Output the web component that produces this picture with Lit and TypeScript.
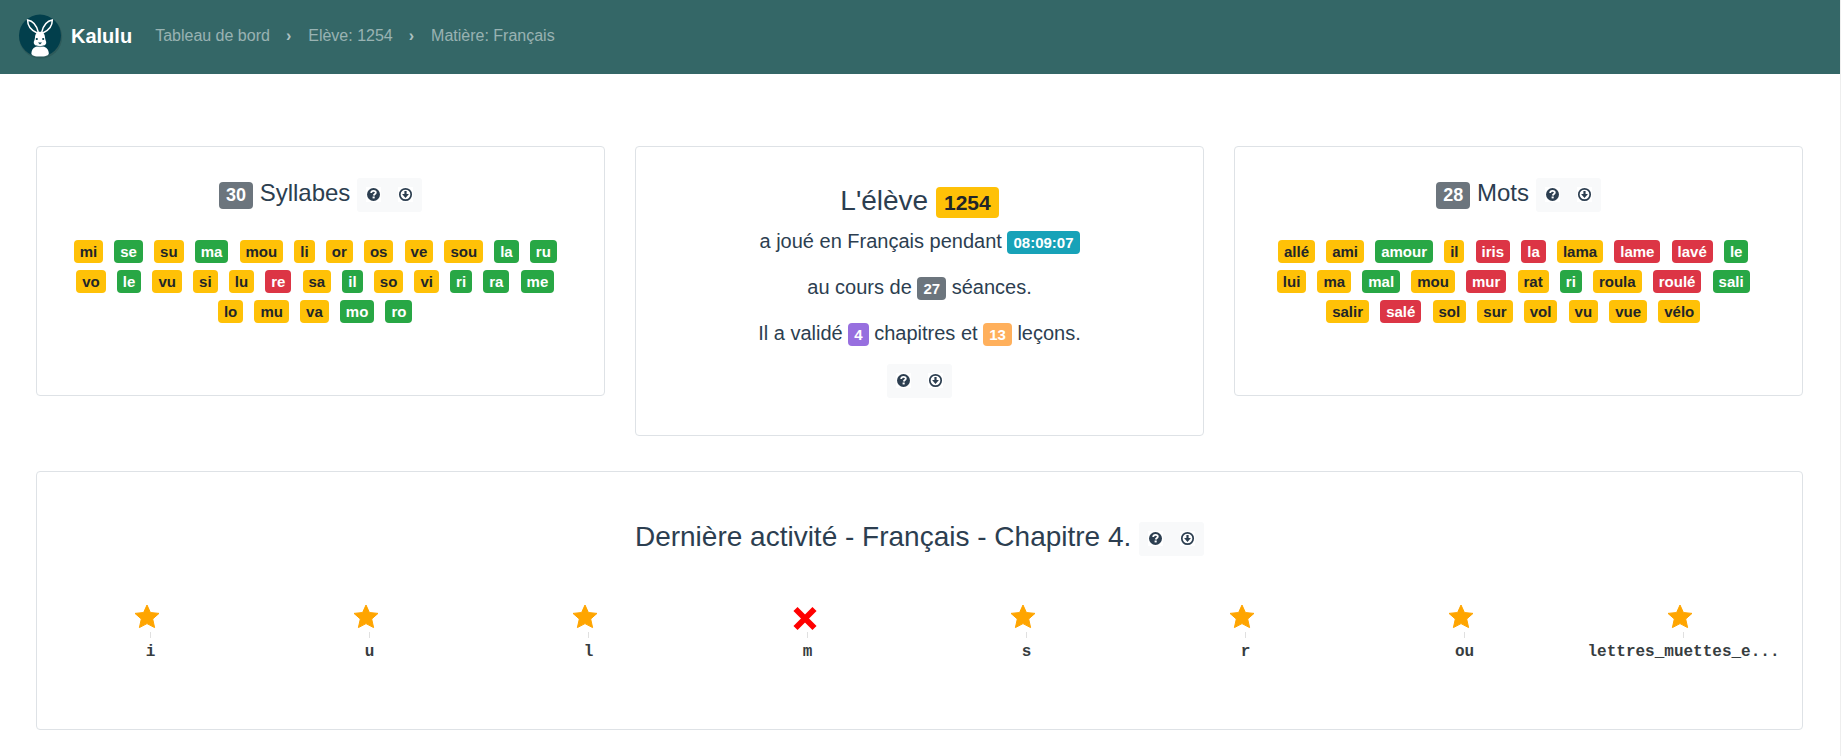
import { LitElement, html, css, svg } from "lit";
import { customElement, property } from "lit/decorators.js";

type Level = "warning" | "success" | "danger";
type Entry = [string, Level];

const LEVELS: Record<string, Level> = { w: "warning", s: "success", d: "danger" };

const parse = (source: string): Entry[] =>
  source.split(" ").map((item) => {
    const [text, level] = item.split(":");
    return [text, LEVELS[level ?? "w"]];
  });

const SYLLABLES = parse(
  "mi se:s su ma:s mou li or os ve sou la:s ru:s vo le:s vu si lu re:d sa il:s so vi ri:s ra:s me:s lo mu va mo:s ro:s"
);
const WORDS = parse(
  "allé ami amour:s il iris:d la:d lama lame:d lavé:d le:s lui ma mal:s mou mur:d rat ri:s roula roulé:d sali:s salir salé:d sol sur vol vu vue vélo"
);
const LESSONS: { name: string; passed: boolean }[] = [
  { name: "i", passed: true },
  { name: "u", passed: true },
  { name: "l", passed: true },
  { name: "m", passed: false },
  { name: "s", passed: true },
  { name: "r", passed: true },
  { name: "ou", passed: true },
  { name: "lettres_muettes_e...", passed: true },
];

const badgeStyles = css`
  .badge {
    display: inline-block;
    padding: 0 6px;
    border-radius: 4px;
    font-size: 15px;
    font-weight: 700;
    line-height: 23px;
    text-align: center;
    vertical-align: baseline;
    white-space: nowrap;
    color: #fff;
  }
  .warning { background: #ffc107; color: #212529; }
  .success { background: #28a745; }
  .danger { background: #dc3545; }
  .secondary { background: #6c757d; }
  .info { background: #17a2b8; }
  .purple { background: #976fdf; }
  .orange { background: #ffb05c; }
`;

@customElement("tool-buttons")
export class ToolButtons extends LitElement {
  static styles = css`
    :host {
      display: inline-flex;
      vertical-align: middle;
    }
    .group {
      display: flex;
      background: #f8f9fa;
      border-radius: 3px;
    }
    .tool {
      display: block;
      padding: 9px 9px 10px;
      border: 0;
      background: none;
      cursor: pointer;
    }
    .tool + .tool { margin-left: -1px; }
    .icon {
      display: block;
      width: 15px;
      height: 15px;
      background: #fff;
    }
  `;
  render() {
    return html`<div class="group" role="group">
      <button class="tool" type="button" aria-label="Aide">
        <svg class="icon" viewBox="0 0 15 15">
          <circle cx="7.5" cy="7.5" r="6.5" fill="#2c3e50" />
          <path d="M5.2 6.1C5.2 4.6 6.2 3.9 7.6 3.9C9 3.9 9.8 4.7 9.8 5.7C9.8 7 8.1 7 7.7 8.5" fill="none" stroke="#fff" stroke-width="1.8" />
          <rect x="6.6" y="9.5" width="2.1" height="1.9" fill="#fff" />
        </svg>
      </button>
      <button class="tool" type="button" aria-label="Télécharger">
        <svg class="icon" viewBox="0 0 15 15">
          <circle cx="7.5" cy="7.5" r="5.7" fill="none" stroke="#2c3e50" stroke-width="1.7" />
          <path d="M6.4 4H8.6V7H10.9L7.5 11L4.1 7H6.4Z" fill="#2c3e50" />
        </svg>
      </button>
    </div>`;
  }
}

@customElement("badge-card")
export class BadgeCard extends LitElement {
  @property() label = "";
  @property({ attribute: false }) entries: Entry[] = [];

  static styles = [
    badgeStyles,
    css`
      :host {
        display: block;
        box-sizing: border-box;
        min-height: 250px;
        padding: 31px 32px 32px;
        border: 1px solid #dee2e6;
        border-radius: 4px;
        text-align: center;
      }
      .title {
        margin: 0 0 23px;
        font-size: 24px;
        font-weight: 400;
        line-height: 29px;
      }
      .count {
        padding: 0 7px;
        font-size: 18px;
        line-height: 27px;
      }
      .list {
        margin: 0;
        padding-right: 5px;
        font-size: 20px;
        line-height: 30px;
      }
    `,
  ];
  render() {
    return html`
      <h4 class="title">
        <span class="badge count secondary">${this.entries.length}</span>
        ${this.label}
        <tool-buttons></tool-buttons>
      </h4>
      <p class="list">${this.entries.map(
        ([text, level]) => html`<span class="badge ${level}">${text}</span>&nbsp; `
      )}</p>
    `;
  }
}

const star = svg`<path d="M13 2L16.4 9.5L25 10.4L18.7 16L20.6 24.6L13 20.6L5.4 24.6L7.3 16L1 10.4L9.6 9.5Z"
  fill="#ffa500" stroke="#ffa500" stroke-width="1" stroke-linejoin="round" />`;
const cross = svg`<path d="M4.5 6L23.5 25M23.5 6L4.5 25" fill="none" stroke="#f00" stroke-width="5.8" />`;

@customElement("app-root")
export class AppRoot extends LitElement {
  static styles = [
    badgeStyles,
    css`
      :host {
        display: block;
        min-height: 100vh;
        box-sizing: border-box;
        border-right: 1px solid #eee;
        background: #fff;
        color: #2c3e50;
        font-family: "Liberation Sans", Arial, sans-serif;
        font-size: 16px;
        line-height: 24px;
      }
      .navbar {
        display: flex;
        align-items: center;
        padding: 12px 16px 14px;
        background: #346767;
      }
      .brand {
        display: flex;
        align-items: center;
        gap: 7px;
        margin-right: 15px;
        color: #fff;
        font-size: 20px;
        font-weight: 700;
        line-height: 30px;
        text-decoration: none;
      }
      .logo { display: block; width: 48px; height: 48px; }
      .crumbs {
        display: flex;
        margin: 0;
        padding: 0;
        list-style: none;
      }
      .crumb + .crumb::before {
        content: "›";
        padding: 0 9px 0 8px;
        color: rgba(255, 255, 255, 0.6);
        font-weight: 700;
      }
      .link {
        padding: 0 8px;
        color: rgba(255, 255, 255, 0.5);
        text-decoration: none;
      }
      .content {
        display: flex;
        flex-direction: column;
        gap: 35px;
        padding: 72px 37px 26px 36px;
      }
      .deck {
        display: grid;
        grid-template-columns: repeat(3, 1fr);
        align-items: start;
        gap: 30px;
      }
      .card {
        border: 1px solid #dee2e6;
        border-radius: 4px;
        text-align: center;
      }
      .summary { padding: 37px 32px; }
      .heading {
        margin: 0;
        font-size: 28px;
        font-weight: 400;
        line-height: 34px;
      }
      .pupil {
        padding: 0 8px;
        font-size: 21px;
        line-height: 31px;
      }
      .line {
        margin: 0 0 16px;
        font-size: 20px;
        line-height: 30px;
      }
      .summary .heading { margin-bottom: 8px; }
      .activity { padding: 48px 0 65px; }
      .lessons {
        display: grid;
        grid-template-columns: repeat(8, 1fr);
        margin: 47px 0 0;
        padding: 0 9px 0 4px;
        list-style: none;
      }
      .lesson {
        display: flex;
        flex-direction: column;
        align-items: center;
        color: #373d3f;
        font-family: "Liberation Mono", monospace;
        font-weight: 700;
      }
      .mark {
        display: block;
        width: 26px;
        height: 29px;
        margin-right: 7px;
      }
      .tick {
        width: 1px;
        height: 6px;
        margin-bottom: 2px;
        background: #e0e0e0;
      }
    `,
  ];

  render() {
    return html`
      <nav class="navbar">
        <a class="brand" href="#">
          <svg class="logo" viewBox="0 0 48 48" aria-hidden="true">
            <circle cx="24.6" cy="25" r="21.6" fill="#000" opacity="0.12" />
            <circle cx="24" cy="23.6" r="21" fill="#023f4c" />
            <g fill="#023f4c" stroke="#fff" stroke-width="1.5">
              <path d="M21.2 21C15.5 18.5 11.5 14 11.6 8C17.5 9 20.8 14.2 22.2 20Z" />
              <path d="M26.8 21C32.5 18.5 36.4 14 36.3 8C30.5 9 27.2 14.2 25.8 20Z" />
            </g>
            <path d="M24 19.8C27.6 19.8 28.8 22.4 29 25.5C29.2 28.4 30.5 29.2 30.2 31.2C29.8 33.4 27.4 34 24 34C20.6 34 18.2 33.4 17.8 31.2C17.5 29.2 18.8 28.4 19 25.5C19.2 22.4 20.4 19.8 24 19.8Z" fill="#fff" />
            <path d="M24 34C29.5 34 32.8 37 32.8 41.5C32.8 43.6 29 44.6 24 44.6C19 44.6 15.4 43.6 15.4 41.5C15.4 37 18.5 34 24 34Z" fill="#fff" />
            <path d="M20 33.8Q24 35.6 28 33.8" stroke="#023f4c" stroke-width="0.6" fill="none" />
            <circle cx="20.8" cy="27" r="1.1" fill="#023f4c" />
            <circle cx="27.2" cy="27" r="1.1" fill="#023f4c" />
            <path d="M22 30.6H26L24 32.6Z" fill="#023f4c" />
          </svg>
          <span>Kalulu</span>
        </a>
        <ol class="crumbs">
          <li class="crumb"><a class="link" href="#">Tableau de bord</a></li>
          <li class="crumb"><a class="link" href="#">Elève: 1254</a></li>
          <li class="crumb"><a class="link" href="#">Matière: Français</a></li>
        </ol>
      </nav>
      <main class="content">
        <div class="deck">
          <badge-card label="Syllabes" .entries=${SYLLABLES}></badge-card>
          <section class="card summary">
            <h3 class="heading">L'élève <span class="badge pupil warning">1254</span></h3>
            <p class="line">a joué en Français pendant <span class="badge info">08:09:07</span></p>
            <p class="line">au cours de <span class="badge secondary">27</span> séances.</p>
            <p class="line">Il a validé <span class="badge purple">4</span> chapitres et <span class="badge orange">13</span> leçons.</p>
            <tool-buttons></tool-buttons>
          </section>
          <badge-card label="Mots" .entries=${WORDS}></badge-card>
        </div>
        <section class="card activity">
          <h3 class="heading">
            Dernière activité - Français - Chapitre 4.
            <tool-buttons></tool-buttons>
          </h3>
          <ul class="lessons">
            ${LESSONS.map(
              ({ name, passed }) => html`<li class="lesson">
                <svg class="mark" viewBox="0 0 26 29" aria-hidden="true">${passed ? star : cross}</svg>
                <span class="tick"></span>
                <span>${name}</span>
              </li>`
            )}
          </ul>
        </section>
      </main>
    `;
  }
}
